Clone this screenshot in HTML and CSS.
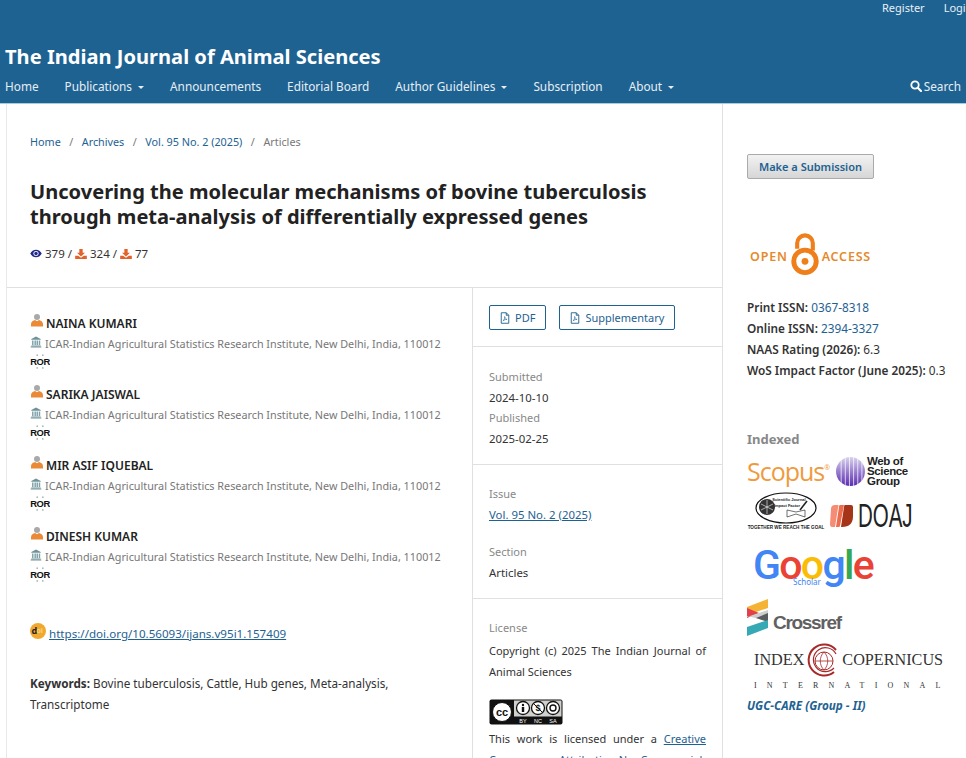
FILE: index.html
```html
<!DOCTYPE html>
<html lang="en">
<head>
<meta charset="utf-8">
<title>Uncovering the molecular mechanisms of bovine tuberculosis</title>
<link rel="stylesheet" href="styles.css">
</head>
<body>
<svg class="defs" width="0" height="0" aria-hidden="true">
  <defs>
    <symbol id="person" viewBox="0 0 14 14">
      <circle cx="7" cy="3.4" r="3" fill="#a9a9a9"/>
      <path d="M1 13v-2.4C1 8.2 3.4 6.6 5 6.4l2 1.4 2-1.4c1.6.2 4 1.8 4 4.2V13z" fill="#ea8a36"/>
    </symbol>
    <symbol id="bank" viewBox="0 0 14 14">
      <path d="M7 .5 1.5 3.4v1h11v-1z" fill="#6f9299"/>
      <path d="M2.4 5.2h1.7v5.4H2.4zm2.8 0h1.7v5.4H5.2zm2.4 0h1.7v5.4H7.600zm2.6 0h1.7v5.4h-1.700z" fill="#7ea2a8"/>
      <path d="M1.500 11h11v1h-11zM.8 12.300h12.400v1.200H.8z" fill="#6f9299"/>
    </symbol>
    <symbol id="ror" viewBox="0 0 20 16">
      <circle cx="7" cy="1.200" r=".9" fill="#9fb8b0"/><circle cx="13" cy="1.200" r=".9" fill="#9fb8b0"/>
      <circle cx="7" cy="14.800" r=".9" fill="#9fb8b0"/><circle cx="13" cy="14.800" r=".9" fill="#9fb8b0"/>
      <text x="10" y="12" text-anchor="middle" class="ror-text">ROR</text>
    </symbol>
    <symbol id="dl" viewBox="0 0 14 12">
      <path d="M5 0h4v4.500h2.800L7 9 2.200 4.500H5z" fill="#e2622b"/>
      <path d="M0 8h3.600L7 10.600 10.400 8H14v4H0z" fill="#e2622b"/>
    </symbol>
    <symbol id="file" viewBox="0 0 12 14">
      <path d="M1.500.7h6l3 3v9.600h-9z M7.500.7v3h3" fill="none" stroke="#1e6292" stroke-width="1.100"/>
      <path d="M3.500 10.500c1.500-1 2.500-3.500 2-5.300.8 2 1.500 3 3 3.600-1.700-.2-3.400.4-5 1.700z" fill="none" stroke="#1e6292" stroke-width=".7"/>
    </symbol>
  </defs>
</svg>

<header class="site-header">
  <div class="user-nav">
    <a class="user-link">Register</a>
    <a class="user-link">Login</a>
  </div>
  <div class="site-name">The Indian Journal of Animal Sciences</div>
  <nav class="primary-nav">
    <a class="nav-link">Home</a>
    <a class="nav-link">Publications <i class="caret"></i></a>
    <a class="nav-link">Announcements</a>
    <a class="nav-link">Editorial Board</a>
    <a class="nav-link">Author Guidelines <i class="caret"></i></a>
    <a class="nav-link">Subscription</a>
    <a class="nav-link">About <i class="caret"></i></a>
    <a class="nav-link search-link">
      <svg class="search-icon" viewBox="0 0 12 12"><circle cx="5" cy="5" r="3.700" fill="none" stroke="#fff" stroke-width="1.800"/><path d="m7.800 7.800 3.200 3.200" stroke="#fff" stroke-width="2.200" stroke-linecap="round"/></svg>Search
    </a>
  </nav>
</header>

<div class="page">
  <main class="main-col">
    <div class="intro">
      <nav class="crumbs">
        <a class="link">Home</a><span class="sep">/</span>
        <a class="link">Archives</a><span class="sep">/</span>
        <a class="link">Vol. 95 No. 2 (2025)</a><span class="sep">/</span>
        <span class="crumb-current">Articles</span>
      </nav>
      <h1 class="article-title">Uncovering the molecular mechanisms of bovine tuberculosis through meta-analysis of differentially expressed genes</h1>
      <div class="stats">
        <svg class="eye" viewBox="0 0 14 10"><path d="M7 .5C4 .5 1.700 2.400.3 5 1.700 7.600 4 9.500 7 9.500s5.300-1.900 6.700-4.500C12.300 2.400 10 .5 7 .5z" fill="#232a8a"/><circle cx="7" cy="5" r="3" fill="#fff"/><circle cx="7" cy="5" r="2" fill="#232a8a"/></svg>
        <span>379 /</span>
        <svg class="dl"><use href="#dl"/></svg>
        <span>324 /</span>
        <svg class="dl"><use href="#dl"/></svg>
        <span>77</span>
      </div>
    </div>

    <div class="entry">
      <section class="entry-main">
        <ul class="authors">
          <li class="author">
            <div class="author-name"><svg class="i-person"><use href="#person"/></svg>NAINA KUMARI</div>
            <div class="author-aff"><svg class="i-bank"><use href="#bank"/></svg>ICAR-Indian Agricultural Statistics Research Institute, New Delhi, India, 110012</div>
            <svg class="i-ror"><use href="#ror"/></svg>
          </li>
          <li class="author">
            <div class="author-name"><svg class="i-person"><use href="#person"/></svg>SARIKA JAISWAL</div>
            <div class="author-aff"><svg class="i-bank"><use href="#bank"/></svg>ICAR-Indian Agricultural Statistics Research Institute, New Delhi, India, 110012</div>
            <svg class="i-ror"><use href="#ror"/></svg>
          </li>
          <li class="author">
            <div class="author-name"><svg class="i-person"><use href="#person"/></svg>MIR ASIF IQUEBAL</div>
            <div class="author-aff"><svg class="i-bank"><use href="#bank"/></svg>ICAR-Indian Agricultural Statistics Research Institute, New Delhi, India, 110012</div>
            <svg class="i-ror"><use href="#ror"/></svg>
          </li>
          <li class="author">
            <div class="author-name"><svg class="i-person"><use href="#person"/></svg>DINESH KUMAR</div>
            <div class="author-aff"><svg class="i-bank"><use href="#bank"/></svg>ICAR-Indian Agricultural Statistics Research Institute, New Delhi, India, 110012</div>
            <svg class="i-ror"><use href="#ror"/></svg>
          </li>
        </ul>
        <div class="doi">
          <svg class="doi-badge" viewBox="0 0 16 16"><circle cx="8" cy="8" r="8" fill="#f0a92e"/><text x="1.500" y="10.500" class="doi-d">d</text><text x="6.500" y="10" class="doi-oi">oi</text></svg>
          <a class="link underlined">https://doi.org/10.56093/ijans.v95i1.157409</a>
        </div>
        <p class="keywords"><b>Keywords:</b> Bovine tuberculosis, Cattle, Hub genes, Meta-analysis, Transcriptome</p>
      </section>

      <aside class="entry-details">
        <div class="detail galleys">
          <a class="galley"><svg class="i-file"><use href="#file"/></svg>PDF</a>
          <a class="galley"><svg class="i-file"><use href="#file"/></svg>Supplementary</a>
        </div>
        <div class="detail dates">
          <div class="label">Submitted</div>
          <div class="value">2024-10-10</div>
          <div class="label">Published</div>
          <div class="value">2025-02-25</div>
        </div>
        <div class="detail issue">
          <div class="label">Issue</div>
          <div class="value"><a class="link underlined">Vol. 95 No. 2 (2025)</a></div>
          <div class="label label-gap">Section</div>
          <div class="value">Articles</div>
        </div>
        <div class="detail license">
          <div class="label">License</div>
          <p class="justify">Copyright (c) 2025 The Indian Journal of Animal Sciences</p>
          <svg class="cc" viewBox="0 0 74 26">
            <rect x=".5" y=".5" width="73" height="25" rx="2" fill="#111"/>
            <rect x="25" y="1.500" width="47.500" height="16" fill="#cfd1cd"/>
            <circle cx="13" cy="13" r="9.500" fill="#fff" stroke="#111" stroke-width="1"/>
            <text x="13" y="16.500" text-anchor="middle" class="cc-text">cc</text>
            <circle cx="34" cy="9" r="6.500" fill="#fff" stroke="#111" stroke-width="1.300"/>
            <circle cx="34" cy="6" r="1.200" fill="#111"/><path d="M32.800 8h2.400v5h-2.400z" fill="#111"/>
            <circle cx="49" cy="9" r="6.500" fill="#fff" stroke="#111" stroke-width="1.300"/>
            <text x="49" y="12" text-anchor="middle" class="cc-sign">$</text>
            <path d="m44.500 4.500 9 9" stroke="#111" stroke-width="1"/>
            <circle cx="64" cy="9" r="6.500" fill="#fff" stroke="#111" stroke-width="1.300"/>
            <circle cx="64" cy="9" r="3" fill="none" stroke="#111" stroke-width="1.400"/>
            <text x="34" y="24" text-anchor="middle" class="cc-small">BY</text>
            <text x="49" y="24" text-anchor="middle" class="cc-small">NC</text>
            <text x="64" y="24" text-anchor="middle" class="cc-small">SA</text>
          </svg>
          <p class="justify cc-note">This work is licensed under a <a class="link underlined">Creative Commons Attribution-NonCommercial-ShareAlike 4.0 International License</a>.</p>
        </div>
      </aside>
    </div>
  </main>

  <aside class="sidebar">
    <a class="submit-btn">Make a Submission</a>

    <div class="oa-logo">
      <span class="oa-word">OPEN</span>
      <svg class="oa-lock" viewBox="0 0 30 46">
        <path d="M7 17V11.500a8 8 0 0 1 16 0V19" fill="none" stroke="#ef7f1a" stroke-width="4.200"/>
        <circle cx="15" cy="30" r="11.500" fill="none" stroke="#ef7f1a" stroke-width="5"/>
        <circle cx="15" cy="30" r="3.500" fill="#ef7f1a"/>
      </svg>
      <span class="oa-word">ACCESS</span>
    </div>

    <ul class="issn">
      <li><b>Print ISSN:</b> <a class="link">0367-8318</a></li>
      <li><b>Online ISSN:</b> <a class="link">2394-3327</a></li>
      <li><b>NAAS Rating (2026):</b> 6.3</li>
      <li><b>WoS Impact Factor (June 2025):</b> 0.3</li>
    </ul>

    <h2 class="indexed">Indexed</h2>

    <div class="logo-row row-scopus">
      <span class="scopus">Scopus<sup class="scopus-r">®</sup></span>
      <svg class="wos-mark" viewBox="0 0 28 28">
        <defs><linearGradient id="wosg" x1="0" y1="0" x2="0" y2="1"><stop offset="0" stop-color="#d8d2ee"/><stop offset="1" stop-color="#5b2bb0"/></linearGradient></defs>
        <circle cx="14" cy="14" r="14" fill="url(#wosg)"/>
        <path d="M5 3v22M9 1v26M13 0v28M17 0v28M21 1v26M25 4v20" stroke="#fff" stroke-width=".7"/>
      </svg>
      <span class="wos-text">Web of<br>Science<br>Group</span>
    </div>

    <div class="logo-row row-doaj">
      <div class="sjif">
        <svg class="sjif-mark" viewBox="4 0 62 32">
          <ellipse cx="35" cy="16" rx="30" ry="15" fill="#fff" stroke="#111" stroke-width="1.200"/>
          <circle cx="16" cy="15" r="8" fill="#333"/>
          <path d="M16 8v14M10 12l12 6M22 12l-12 6" stroke="#fff" stroke-width=".6"/>
          <path d="M36 25l9-3 9 3v-7l-9 2-9-2z" fill="#fff" stroke="#333" stroke-width=".7"/>
          <path d="M49 18l7-9" stroke="#222" stroke-width="1.600"/>
          <text x="38" y="9" text-anchor="middle" class="sjif-text">Scientific Journal</text>
          <text x="36" y="15" text-anchor="middle" class="sjif-text">Impact Factor</text>
        </svg>
        <span class="sjif-tag">TOGETHER WE REACH THE GOAL</span>
      </div>
      <svg class="doaj-mark" viewBox="0 0 23 24">
        <path d="M5 1h3q1 0 0 3L5 23H2Q0 23 0 20L1 5q0-4 4-4z" fill="#f58c75"/>
        <path d="M10 1h4L10 22q0 1-2 1H6L9 3q0-2 1-2z" fill="#ec6c4e"/>
        <path d="M15 1h6q2 0 2 2v9q0 11-11 11H11l3-20q0-2 1-2z" fill="#a63418"/>
      </svg>
      <span class="doaj">DOAJ</span>
    </div>

    <div class="google">
      <span class="g-word"><span class="g-b">G</span><span class="g-r">o</span><span class="g-y">o</span><span class="g-b">g</span><span class="g-g">l</span><span class="g-r">e</span></span>
      <span class="g-sch">Scholar</span>
    </div>

    <div class="logo-row row-crossref">
      <svg class="cr-mark" viewBox="0 0 22 37">
        <path d="M0 8 21 0v9L0 16z" fill="#f5b335"/>
        <path d="M0 9l12 5L0 19z" fill="#e2414b"/>
        <path d="M0 18l21-7v11L0 17z" fill="#cfcfcf"/>
        <path d="M21 14v9L9 19z" fill="#5a5c5e"/>
        <path d="M0 28 21 21v8L0 37z" fill="#35aab4"/>
      </svg>
      <span class="crossref">Crossref</span>
    </div>

    <div class="copernicus">
      <div class="cop-top">
        <span>INDEX</span>
        <svg class="cop-globe" viewBox="0 0 32 34">
          <path d="M29 7A15.500 15.500 0 1 0 27 29" fill="none" stroke="#a72a2a" stroke-width="2"/>
          <path d="M29 11A12 12 0 1 0 27 25" fill="none" stroke="#a72a2a" stroke-width="1.200"/>
          <circle cx="17" cy="18" r="9" fill="none" stroke="#a72a2a" stroke-width="1"/>
          <path d="M8 18h18M17 9c-5 5-5 13 0 18M17 9c5 5 5 13 0 18" fill="none" stroke="#a72a2a" stroke-width=".8"/>
        </svg>
        <span>COPERNICUS</span>
      </div>
      <div class="cop-sub">INTERNATIONAL</div>
    </div>

    <div class="ugc">UGC-CARE (Group - II)</div>
  </aside>
</div>
</body>
</html>
```

FILE: styles.css
```css
* { box-sizing: border-box; }

html, body {
  margin: 0;
  height: 758px;
  overflow: hidden;
  background: #fff;
}

body {
  font-family: "Noto Sans", sans-serif;
  font-size: 12px;
  line-height: 21px;
  color: #333;
}

.defs { position: absolute; }

ul { list-style: none; margin: 0; padding: 0; }
p { margin: 0; }

.link { color: #1e6292; }
.underlined { text-decoration: underline; }

/* header */
.site-header {
  height: 104px;
  background: #1e6292;
  border-bottom: 1px solid #a7cbe0;
  color: #fff;
  display: flex;
  flex-direction: column;
}

.user-nav {
  height: 15px;
  display: flex;
  justify-content: flex-start;
  gap: 19px;
  padding-left: 882px;
  font-size: 11px;
  line-height: 15px;
  white-space: nowrap;
  color: #e8f0f5;
}

.site-name {
  margin-top: 28px;
  padding-left: 5px;
  font-size: 20.100px;
  line-height: 27px;
  font-weight: 700;
}

.primary-nav {
  margin-top: 0;
  padding: 0 5px;
  height: 32px;
  width: 966px;
  display: flex;
  align-items: center;
  gap: 26px;
  font-size: 11.800px;
  color: #e6eef4;
  white-space: nowrap;
}

.caret {
  display: inline-block;
  width: 0;
  height: 0;
  margin-left: 3px;
  vertical-align: 2px;
  border-top: 3px solid #e6eef4;
  border-left: 3px solid transparent;
  border-right: 3px solid transparent;
}

.search-link {
  margin-left: auto;
  display: flex;
  align-items: center;
  gap: 2px;
}

.search-icon { width: 12px; height: 12px; }

/* page */
.page {
  display: flex;
  height: 654px;
}

.main-col {
  margin-left: 6px;
  width: 717px;
  flex: none;
  border-left: 1px solid #e8e8e8;
  border-right: 1px solid #e0e0e0;
}

.intro {
  height: 184px;
  padding: 27px 24px 0 23px;
  border-bottom: 1px solid #e0e0e0;
}

.crumbs {
  display: flex;
  align-items: center;
  font-size: 10.800px;
  line-height: 21px;
}

.sep {
  margin: 0 8.500px;
  color: #777;
}

.crumb-current { color: #777; }

.article-title {
  margin: 27px 0 0;
  font-size: 20.070px;
  line-height: 25px;
  font-weight: 700;
  color: #222;
}

.stats {
  margin-top: 14px;
  display: flex;
  align-items: center;
  gap: 3px;
  font-size: 11.500px;
  color: #333;
}

.eye { width: 12px; height: 9px; }
.dl { width: 12px; height: 10px; }

.entry {
  display: flex;
  height: 470px;
}

.entry-main {
  width: 466px;
  flex: none;
  padding: 24px 23px 0;
  border-right: 1px solid #e0e0e0;
}

.author {
  height: 71px;
  overflow: hidden;
}

.author-name {
  display: flex;
  align-items: center;
  gap: 2px;
  height: 21px;
  padding-top: 1px;
  font-weight: 600;
  font-size: 12px;
  color: #222;
}

.i-person { width: 14px; height: 15px; margin-top: -5px; }

.author-aff {
  display: flex;
  align-items: center;
  gap: 3px;
  height: 21px;
  font-size: 10.800px;
  color: #777;
  white-space: nowrap;
}

.i-bank { width: 12px; height: 14px; margin-top: -4px; }

.i-ror {
  display: block;
  width: 20px;
  height: 15px;
  margin-top: 0;
}

.ror-text {
  font-family: "Liberation Sans", sans-serif;
  font-size: 10px;
  font-weight: 700;
  letter-spacing: -.4px;
  fill: #111;
}

.doi {
  margin-top: 27px;
  display: flex;
  align-items: center;
  gap: 3px;
  font-size: 11.600px;
}

.doi-badge { width: 16px; height: 16px; margin-top: -6px; }
.doi-d { font-size: 9px; font-weight: 700; fill: #222; }
.doi-oi { font-size: 7px; font-weight: 700; fill: #fbd27a; }

.keywords {
  margin-top: 29px;
  font-size: 11.700px;
  color: #333;
}

.keywords b { font-weight: 700; }

.entry-details {
  flex: 1;
  min-width: 0;
}

.detail {
  padding: 0 16px 0 16px;
  border-bottom: 1px solid #e0e0e0;
}

.galleys {
  height: 59px;
  padding-top: 17px;
  display: flex;
  gap: 13px;
}

.galley {
  height: 25px;
  padding: 0 10px;
  display: flex;
  align-items: center;
  gap: 5px;
  border: 1px solid #1e6292;
  border-radius: 2px;
  font-size: 11px;
  color: #1e6292;
}

.i-file { width: 10px; height: 12px; }

.dates {
  height: 118px;
  padding-top: 20px;
}

.label {
  font-size: 11px;
  line-height: 20.700px;
  color: #888;
}

.value {
  font-size: 11.400px;
  line-height: 20.700px;
  color: #333;
}

.issue {
  height: 134px;
  padding-top: 19px;
}

.label-gap { margin-top: 17px; }

.license {
  border-bottom: 0;
  padding-top: 19px;
}

.justify {
  text-align: justify;
  font-size: 11px;
  line-height: 21px;
  margin-top: 1px;
}

.cc {
  display: block;
  width: 74px;
  height: 26px;
  margin-top: 17px;
}

.cc-text { font-family: "Liberation Sans", sans-serif; font-size: 11px; font-weight: 700; fill: #111; }
.cc-sign { font-family: "Liberation Sans", sans-serif; font-size: 9px; font-weight: 700; fill: #111; }
.cc-small { font-family: "Liberation Sans", sans-serif; font-size: 5.500px; fill: #fff; }
.cc-note { margin-top: 3px; }

/* sidebar */
.sidebar {
  flex: 1;
  min-width: 0;
  padding: 50px 0 0 24px;
}

.submit-btn {
  display: block;
  width: 127px;
  height: 25px;
  line-height: 24px;
  text-align: center;
  font-size: 11px;
  font-weight: 600;
  color: #1e6292;
  background: linear-gradient(#f2f2f2, #d6d6d6);
  border: 1px solid #aaa;
  border-radius: 2px;
}

.oa-logo {
  margin-top: 53px;
  margin-left: 3px;
  display: flex;
  align-items: flex-end;
  gap: 2px;
  height: 45px;
  white-space: nowrap;
}

.oa-word {
  font-size: 12.500px;
  line-height: 17px;
  font-weight: 600;
  letter-spacing: .8px;
  color: #e58a2c;
  margin-bottom: 12px;
}

.oa-lock { width: 30px; height: 45px; }

.issn {
  margin-top: 20px;
  font-size: 11.800px;
  white-space: nowrap;
}

.issn b { font-weight: 600; color: #333; }

.indexed {
  margin: 48px 0 0;
  font-size: 13px;
  line-height: 21px;
  font-weight: 700;
  color: #888;
}

.logo-row {
  display: flex;
  align-items: center;
}

.row-scopus {
  margin-top: 5px;
  height: 32px;
  gap: 7px;
}

.scopus {
  font-family: "Open Sans", sans-serif;
  font-size: 25px;
  line-height: 32px;
  color: #f09a3e;
  letter-spacing: -1px;
  white-space: nowrap;
}

.scopus-r { font-size: 7px; line-height: 0; vertical-align: 11px; }

.wos-mark { width: 29px; height: 29px; flex: none; }

.wos-text {
  margin-left: -5px;
  font-family: "Liberation Sans", sans-serif;
  font-size: 11.500px;
  line-height: 10px;
  letter-spacing: -.4px;
  font-weight: 700;
  color: #222;
}

.row-doaj {
  margin-top: 5px;
  height: 40px;
  gap: 5px;
}

.sjif {
  width: 78px;
  flex: none;
  display: flex;
  flex-direction: column;
  align-items: center;
}

.sjif-mark { width: 62px; height: 32px; display: block; }
.sjif-text { font-family: "Liberation Sans", sans-serif; font-size: 4px; font-weight: 700; fill: #222; }

.sjif-tag {
  font-family: "Liberation Sans", sans-serif;
  font-size: 4.600px;
  line-height: 8px;
  font-weight: 700;
  white-space: nowrap;
  color: #222;
}

.doaj-mark { width: 23px; height: 24px; margin-top: 8px; }

.doaj {
  font-family: "Liberation Sans", sans-serif;
  font-size: 33px;
  line-height: 30px;
  margin-top: 8px;
  margin-left: 0;
  transform: scaleX(.62);
  transform-origin: left center;
  color: #222;
}

.google {
  position: relative;
  margin: 12px 0 0 6px;
  height: 55px;
}

.g-word {
  font-family: "Roboto", sans-serif;
  font-size: 41px;
  line-height: 42px;
  font-weight: 500;
  letter-spacing: -1.700px;
}

.g-b { color: #4285f4; }
.g-r { color: #ea4335; }
.g-y { color: #fbbc05; }
.g-g { color: #34a853; }

.g-sch {
  position: absolute;
  left: 40px;
  top: 33px;
  font-size: 8px;
  line-height: 10px;
  color: #4285f4;
}

.row-crossref {
  margin-top: 0;
  height: 37px;
  gap: 4px;
}

.cr-mark { width: 22px; height: 37px; }

.crossref {
  font-family: "Liberation Sans", sans-serif;
  font-size: 19px;
  letter-spacing: -1.300px;
  font-weight: 700;
  margin-top: 10px;
  color: #5f6163;
}

.copernicus {
  margin-top: 7px;
  font-family: "Liberation Serif", serif;
  color: #333;
}

.cop-top {
  display: flex;
  align-items: center;
  gap: 3px;
  height: 34px;
  margin-left: 7px;
  font-size: 16.200px;
  white-space: nowrap;
}

.cop-globe { width: 32px; height: 34px; }

.cop-sub {
  margin: 4px 0 0 7px;
  font-size: 8px;
  line-height: 10px;
  letter-spacing: 10.200px;
  white-space: nowrap;
}

.ugc {
  margin-top: 4px;
  font-size: 11.700px;
  font-weight: 700;
  font-style: italic;
  color: #1e6292;
}
```
